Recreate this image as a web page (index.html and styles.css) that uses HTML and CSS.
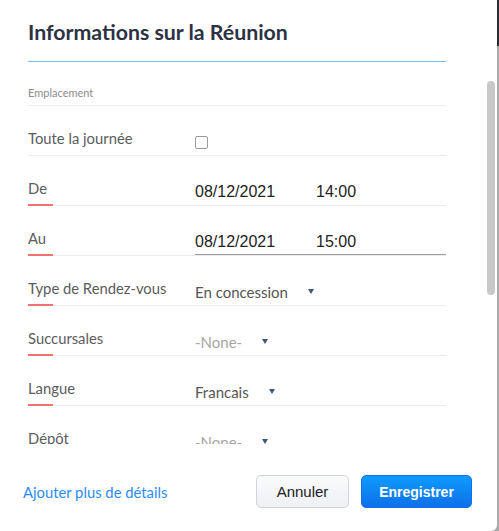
FILE: index.html
```html
<!DOCTYPE html>
<html lang="fr">
<head>
  <meta charset="UTF-8" />
  <title>Informations sur la Réunion</title>
  <link rel="stylesheet" href="styles.css">
</head>
<body>

  <div class="modal">
    <div class="modal-header">
      <h1 class="title">Informations sur la Réunion</h1>
    </div>

    <div class="modal-body">
      <div class="section-row">Emplacement</div>

      <div class="row">
        <div class="label">Toute la journée</div>
        <div class="value"><span class="checkbox"></span></div>
      </div>

      <div class="row">
        <div class="label required">De</div>
        <div class="value datetime">
          <span class="date">08/12/2021</span>
          <span class="time">14:00</span>
        </div>
      </div>

      <div class="row">
        <div class="label required">Au</div>
        <div class="value datetime active">
          <span class="date">08/12/2021</span>
          <span class="time">15:00</span>
        </div>
      </div>

      <div class="row">
        <div class="label required">Type de Rendez-vous</div>
        <div class="value select"><span>En concession</span><i class="caret"></i></div>
      </div>

      <div class="row">
        <div class="label required">Succursales</div>
        <div class="value select empty"><span>-None-</span><i class="caret"></i></div>
      </div>

      <div class="row">
        <div class="label required">Langue</div>
        <div class="value select"><span>Francais</span><i class="caret"></i></div>
      </div>

      <div class="row">
        <div class="label">Dépôt</div>
        <div class="value select empty"><span>-None-</span><i class="caret"></i></div>
      </div>
    </div>

    <div class="modal-footer">
      <a class="more-link" href="#">Ajouter plus de détails</a>
      <div class="actions">
        <button class="btn btn-cancel">Annuler</button>
        <button class="btn btn-save">Enregistrer</button>
      </div>
    </div>

    <div class="scroll-thumb"></div>
  </div>

</body>
</html>
```

FILE: styles.css
```css
html, body {
  margin: 0;
  padding: 0;
  height: 100%;
  overflow: hidden;
}

body {
  background: linear-gradient(#2b2b38 0 46px, #a9a9a9 46px);
  font-family: Lato, "Noto Sans", sans-serif;
}

.modal {
  position: relative;
  width: 497px;
  height: 531px;
  background: white;
  border-bottom-right-radius: 6px;
  display: flex;
  flex-direction: column;
}

.modal-header {
  margin: 0 51px 0 28px;
  padding: 17px 0 14px;
  border-bottom: 1px solid #6cc4e6;
}

.title {
  margin: 0;
  font-size: 21.3px;
  line-height: 30px;
  font-weight: 700;
  color: #2c3242;
}

.modal-body {
  height: 382px;
  overflow: hidden;
  margin: 0 51px 0 28px;
}

.section-row {
  height: 44px;
  box-sizing: border-box;
  padding-top: 24px;
  font-size: 11px;
  line-height: 14px;
  color: #8c8c8c;
  border-bottom: 1px solid #ececec;
}

.row {
  position: relative;
  display: flex;
  height: 50px;
  box-sizing: border-box;
  border-bottom: 1px solid #ececec;
}

.label {
  width: 167px;
  padding-top: 22px;
  font-size: 14.8px;
  line-height: 20px;
  color: #5c5c5c;
}

.label.required::after {
  content: "";
  position: absolute;
  left: 0;
  bottom: -1px;
  width: 25px;
  height: 2px;
  background: #f0736e;
}

.value {
  flex: 1;
  display: flex;
  align-items: flex-start;
  padding-top: 26px;
  font-size: 15px;
  line-height: 20px;
  color: #555;
}

.checkbox {
  display: block;
  width: 11px;
  height: 11px;
  margin-top: 4px;
  border: 1px solid #9a9a9a;
  border-radius: 2px;
}

.datetime {
  font-family: "Liberation Sans", Arial, sans-serif;
  font-size: 16px;
  color: #222;
}

.datetime .date {
  width: 121px;
}

.datetime.active {
  box-sizing: border-box;
  border-bottom: 1px solid #9c9c9c;
}

.select.empty {
  color: #a6a6a6;
}

.caret {
  width: 0;
  height: 0;
  margin: 7px 0 0 20px;
  border-left: 3.5px solid transparent;
  border-right: 3.5px solid transparent;
  border-top: 5px solid #3d5877;
}

.modal-footer {
  display: flex;
  justify-content: space-between;
  align-items: center;
  padding: 31px 25px 0 23px;
}

.more-link {
  font-size: 14.8px;
  color: #2d8cf0;
  text-decoration: none;
}

.actions {
  display: flex;
  gap: 12px;
}

.btn {
  height: 33px;
  border-radius: 5px;
  font-family: "Liberation Sans", Arial, sans-serif;
  font-size: 15px;
  cursor: pointer;
}

.btn-cancel {
  width: 93px;
  border: 1px solid #cfd3da;
  background: linear-gradient(#fbfbfd, #eef0f4);
  color: #222;
}

.btn-save {
  width: 111px;
  border: 1px solid #0e71eb;
  background: linear-gradient(#0e9bfd, #0e70ea);
  color: white;
  font-weight: 700;
  font-size: 14px;
}

.scroll-thumb {
  position: absolute;
  left: 487px;
  top: 81px;
  width: 8px;
  height: 214px;
  border-radius: 4px;
  background: #c8c8c8;
}
```
